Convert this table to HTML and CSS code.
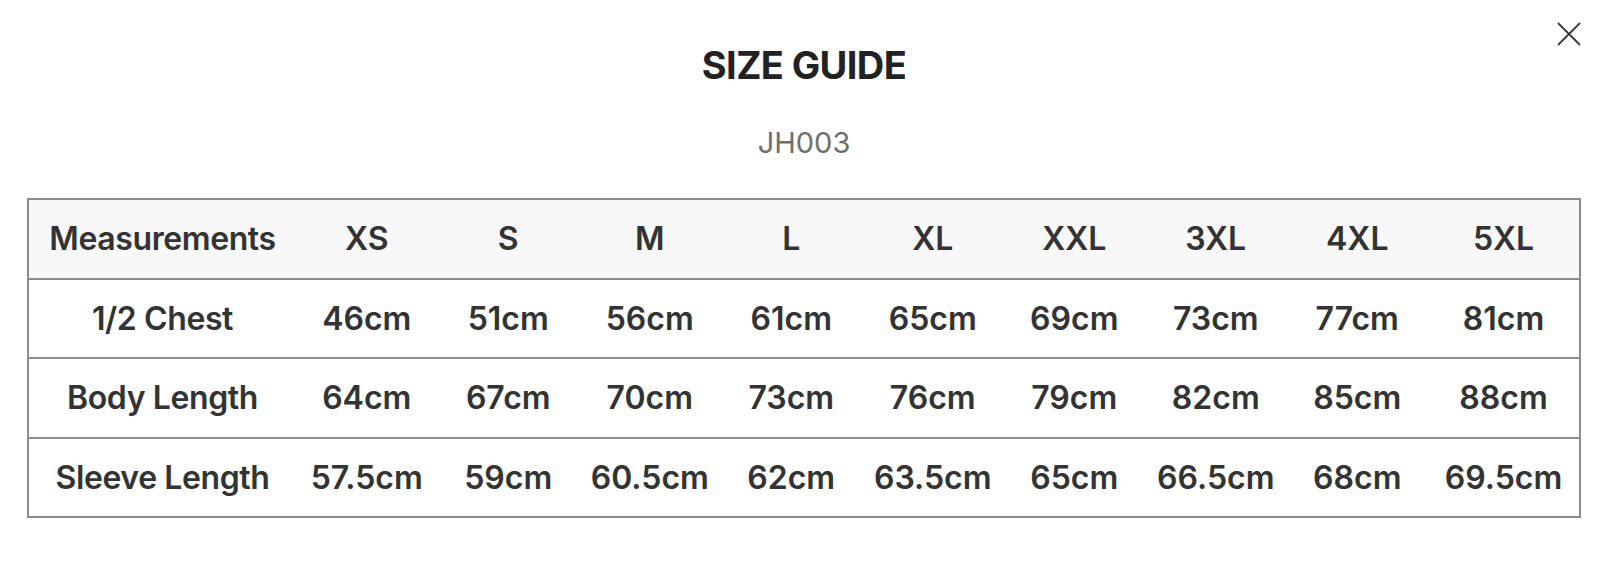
FILE: index.html
```html
<!DOCTYPE html>
<html lang="en">
<head>
<meta charset="utf-8">
<title>Size Guide</title>
<link rel="stylesheet" href="styles.css">
</head>
<body>
<div class="modal">
  <button class="close" aria-label="Close">
    <svg width="24" height="24" viewBox="0 0 24 24"><path d="M1 1 L23 23 M23 1 L1 23" stroke="#3a3a3a" stroke-width="1.8" fill="none"/></svg>
  </button>
  <h1 class="title">SIZE GUIDE</h1>
  <p class="code">JH003</p>
  <table class="sizes">
    <colgroup>
      <col class="c-first">
      <col class="c-size"><col class="c-size"><col class="c-size"><col class="c-size"><col class="c-size"><col class="c-size"><col class="c-size"><col class="c-size"><col class="c-last">
    </colgroup>
    <thead>
      <tr><th>Measurements</th><th>XS</th><th>S</th><th>M</th><th>L</th><th>XL</th><th>XXL</th><th>3XL</th><th>4XL</th><th>5XL</th></tr>
    </thead>
    <tbody>
      <tr><td>1/2 Chest</td><td>46cm</td><td>51cm</td><td>56cm</td><td>61cm</td><td>65cm</td><td>69cm</td><td>73cm</td><td>77cm</td><td>81cm</td></tr>
      <tr><td>Body Length</td><td>64cm</td><td>67cm</td><td>70cm</td><td>73cm</td><td>76cm</td><td>79cm</td><td>82cm</td><td>85cm</td><td>88cm</td></tr>
      <tr><td>Sleeve Length</td><td>57.5cm</td><td>59cm</td><td>60.5cm</td><td>62cm</td><td>63.5cm</td><td>65cm</td><td>66.5cm</td><td>68cm</td><td>69.5cm</td></tr>
    </tbody>
  </table>
</div>
</body>
</html>
```

FILE: styles.css
```css
html, body {
  margin: 0;
  padding: 0;
  background: #ffffff;
}

.modal {
  position: relative;
  padding: 43px 19px 0 27px;
  font-family: Inter, "Liberation Sans", Arial, sans-serif;
  color: #333333;
}

.close {
  position: absolute;
  top: 22px;
  right: 19px;
  width: 24px;
  height: 24px;
  padding: 0;
  border: 0;
  background: none;
  cursor: pointer;
}

.close svg {
  display: block;
}

.title {
  margin: 0;
  text-align: center;
  font-size: 38px;
  line-height: 44px;
  font-weight: 700;
  letter-spacing: -0.6px;
  color: #222222;
}

.code {
  margin: 38px 0 0;
  text-align: center;
  font-size: 29px;
  line-height: 35px;
  font-weight: 400;
  color: #6e6e6e;
}

.sizes {
  margin-top: 38px;
  border-collapse: collapse;
  table-layout: fixed;
  width: 100%;
  border: 2px solid #8c8c8c;
}

.c-first {
  width: 268px;
}

.c-size {
  width: 141.5px;
}

.sizes th,
.sizes td {
  height: 77.5px;
  padding: 0;
  text-align: center;
  vertical-align: middle;
  font-size: 32px;
  line-height: 39px;
  font-weight: 600;
  white-space: nowrap;
  color: #333333;
}

.sizes th {
  background: #f8f8f8;
}

.sizes td:first-child,
.sizes th:first-child {
  letter-spacing: -0.4px;
}

.sizes tr {
  border-bottom: 2px solid #8c8c8c;
}
```
